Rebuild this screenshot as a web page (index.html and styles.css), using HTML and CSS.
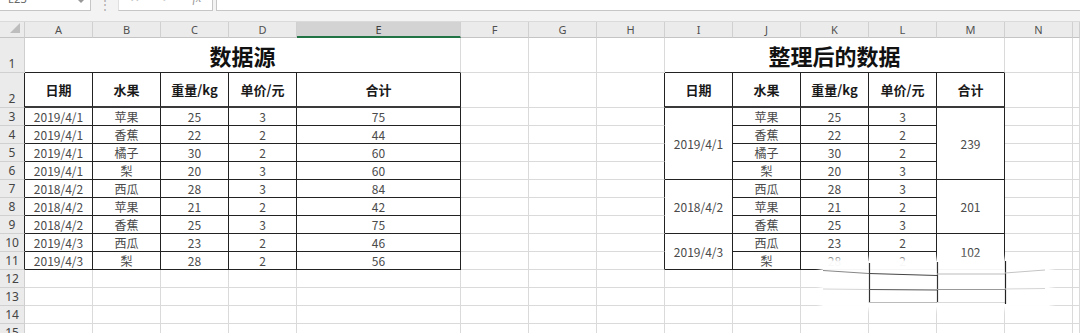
FILE: index.html
```html
<!DOCTYPE html>
<html lang="zh">
<head>
    <meta charset="UTF-8">
    <title>数据源</title>
    <link rel="stylesheet" href="styles.css">
</head>
<body>
<div class="page">
    <div class="bar">
        <div class="namebox"><span>E23</span><i class="caret"></i></div>
        <div class="dots">&#8942;</div>
        <div class="fxbox"><span>&#10005;</span><span>&#10003;</span><span class="fx">fx</span></div>
        <div class="formula"></div>
    </div>
    <div class="strip"></div>

    <div class="sheet">
        <!-- column headers -->
        <div class="corner"><svg width="12" height="12" viewBox="0 0 12 12"><polygon points="11,1 11,11 1,11" fill="#bdbdbd"/></svg></div>
        <div class="hd">A</div><div class="hd">B</div><div class="hd">C</div><div class="hd">D</div>
        <div class="hd sel">E</div><div class="hd">F</div><div class="hd">G</div><div class="hd">H</div>
        <div class="hd">I</div><div class="hd">J</div><div class="hd">K</div><div class="hd">L</div>
        <div class="hd">M</div><div class="hd">N</div><div class="hd"></div>

        <!-- row 1 -->
        <div class="rh">1</div>
        <div class="cell title ab span5">数据源</div>
        <div class="cell"></div><div class="cell"></div><div class="cell"></div>
        <div class="cell title ab span5">整理后的数据</div>
        <div class="cell"></div><div class="cell"></div>

        <!-- row 2 -->
        <div class="rh lb">2</div>
        <div class="cell t th">日期</div><div class="cell t th">水果</div><div class="cell t th">重量/kg</div><div class="cell t th">单价/元</div><div class="cell t th">合计</div>
        <div class="cell"></div><div class="cell"></div><div class="cell lb"></div>
        <div class="cell t th">日期</div><div class="cell t th">水果</div><div class="cell t th">重量/kg</div><div class="cell t th">单价/元</div><div class="cell t th">合计</div>
        <div class="cell"></div><div class="cell"></div>

        <!-- row 3 -->
        <div class="rh lb">3</div>
        <div class="cell t">2019/4/1</div><div class="cell t">苹果</div><div class="cell t">25</div><div class="cell t">3</div><div class="cell t">75</div>
        <div class="cell"></div><div class="cell"></div><div class="cell lb"></div>
        <div class="cell t rows4">2019/4/1</div><div class="cell t">苹果</div><div class="cell t">25</div><div class="cell t">3</div><div class="cell t rows4">239</div>
        <div class="cell"></div><div class="cell"></div>

        <!-- row 4 -->
        <div class="rh lb">4</div>
        <div class="cell t">2019/4/1</div><div class="cell t">香蕉</div><div class="cell t">22</div><div class="cell t">2</div><div class="cell t">44</div>
        <div class="cell"></div><div class="cell"></div><div class="cell lb"></div>
        <div class="cell t">香蕉</div><div class="cell t">22</div><div class="cell t">2</div>
        <div class="cell"></div><div class="cell"></div>

        <!-- row 5 -->
        <div class="rh lb">5</div>
        <div class="cell t">2019/4/1</div><div class="cell t">橘子</div><div class="cell t">30</div><div class="cell t">2</div><div class="cell t">60</div>
        <div class="cell"></div><div class="cell"></div><div class="cell lb"></div>
        <div class="cell t">橘子</div><div class="cell t">30</div><div class="cell t">2</div>
        <div class="cell"></div><div class="cell"></div>

        <!-- row 6 -->
        <div class="rh lb">6</div>
        <div class="cell t">2019/4/1</div><div class="cell t">梨</div><div class="cell t">20</div><div class="cell t">3</div><div class="cell t">60</div>
        <div class="cell"></div><div class="cell"></div><div class="cell lb"></div>
        <div class="cell t">梨</div><div class="cell t">20</div><div class="cell t">3</div>
        <div class="cell"></div><div class="cell"></div>

        <!-- row 7 -->
        <div class="rh lb">7</div>
        <div class="cell t">2018/4/2</div><div class="cell t">西瓜</div><div class="cell t">28</div><div class="cell t">3</div><div class="cell t">84</div>
        <div class="cell"></div><div class="cell"></div><div class="cell lb"></div>
        <div class="cell t rows3">2018/4/2</div><div class="cell t">西瓜</div><div class="cell t">28</div><div class="cell t">3</div><div class="cell t rows3">201</div>
        <div class="cell"></div><div class="cell"></div>

        <!-- row 8 -->
        <div class="rh lb">8</div>
        <div class="cell t">2018/4/2</div><div class="cell t">苹果</div><div class="cell t">21</div><div class="cell t">2</div><div class="cell t">42</div>
        <div class="cell"></div><div class="cell"></div><div class="cell lb"></div>
        <div class="cell t">苹果</div><div class="cell t">21</div><div class="cell t">2</div>
        <div class="cell"></div><div class="cell"></div>

        <!-- row 9 -->
        <div class="rh lb">9</div>
        <div class="cell t">2018/4/2</div><div class="cell t">香蕉</div><div class="cell t">25</div><div class="cell t">3</div><div class="cell t">75</div>
        <div class="cell"></div><div class="cell"></div><div class="cell lb"></div>
        <div class="cell t">香蕉</div><div class="cell t">25</div><div class="cell t">3</div>
        <div class="cell"></div><div class="cell"></div>

        <!-- row 10 -->
        <div class="rh lb">10</div>
        <div class="cell t">2019/4/3</div><div class="cell t">西瓜</div><div class="cell t">23</div><div class="cell t">2</div><div class="cell t">46</div>
        <div class="cell"></div><div class="cell"></div><div class="cell lb"></div>
        <div class="cell t rows2">2019/4/3</div><div class="cell t">西瓜</div><div class="cell t">23</div><div class="cell t">2</div><div class="cell t rows2">102</div>
        <div class="cell"></div><div class="cell"></div>

        <!-- row 11 -->
        <div class="rh lb">11</div>
        <div class="cell t">2019/4/3</div><div class="cell t">梨</div><div class="cell t">28</div><div class="cell t">2</div><div class="cell t">56</div>
        <div class="cell"></div><div class="cell"></div><div class="cell lb"></div>
        <div class="cell t">梨</div><div class="cell t">28</div><div class="cell t">2</div>
        <div class="cell"></div><div class="cell"></div>

        <!-- rows 12-15 -->
        <div class="rh">12</div>
        <div class="cell"></div><div class="cell"></div><div class="cell"></div><div class="cell"></div><div class="cell"></div>
        <div class="cell"></div><div class="cell"></div><div class="cell"></div><div class="cell"></div><div class="cell"></div>
        <div class="cell"></div><div class="cell"></div><div class="cell"></div><div class="cell"></div><div class="cell"></div>
        <div class="rh">13</div>
        <div class="cell"></div><div class="cell"></div><div class="cell"></div><div class="cell"></div><div class="cell"></div>
        <div class="cell"></div><div class="cell"></div><div class="cell"></div><div class="cell"></div><div class="cell"></div>
        <div class="cell"></div><div class="cell"></div><div class="cell"></div><div class="cell"></div><div class="cell"></div>
        <div class="rh">14</div>
        <div class="cell"></div><div class="cell"></div><div class="cell"></div><div class="cell"></div><div class="cell"></div>
        <div class="cell"></div><div class="cell"></div><div class="cell"></div><div class="cell"></div><div class="cell"></div>
        <div class="cell"></div><div class="cell"></div><div class="cell"></div><div class="cell"></div><div class="cell"></div>
        <div class="rh">15</div>
        <div class="cell"></div><div class="cell"></div><div class="cell"></div><div class="cell"></div><div class="cell"></div>
        <div class="cell"></div><div class="cell"></div><div class="cell"></div><div class="cell"></div><div class="cell"></div>
        <div class="cell"></div><div class="cell"></div><div class="cell"></div><div class="cell"></div><div class="cell"></div>
    </div>

    <!-- smudged patch over the lower right of the second table -->
    <div class="smudge">
        <svg width="226" height="46" viewBox="0 0 226 46">
            <line x1="0" y1="9.5" x2="46" y2="12.5" stroke="#888" stroke-width="1"/>
            <line x1="0" y1="28" x2="46" y2="28.5" stroke="#d4d4d4" stroke-width="1"/>
            <line x1="46.5" y1="2" x2="46.5" y2="42" stroke="#333" stroke-width="1.2"/>
            <line x1="46" y1="12.5" x2="114" y2="14.5" stroke="#444" stroke-width="1"/>
            <line x1="46" y1="28.5" x2="114" y2="29" stroke="#555" stroke-width="1"/>
            <line x1="46" y1="41.5" x2="114" y2="41.5" stroke="#bbb" stroke-width="1"/>
            <line x1="114.5" y1="1" x2="114.5" y2="42" stroke="#333" stroke-width="1.2"/>
            <line x1="114" y1="13" x2="182" y2="13" stroke="#bbb" stroke-width="1"/>
            <line x1="114" y1="28.5" x2="182" y2="28.5" stroke="#999" stroke-width="1"/>
            <line x1="114" y1="41.5" x2="182" y2="41.5" stroke="#dadada" stroke-width="1"/>
            <line x1="182.5" y1="0" x2="182.5" y2="43" stroke="#222" stroke-width="1.2"/>
            <line x1="182" y1="12" x2="222" y2="9" stroke="#c4c4c4" stroke-width="1"/>
            <line x1="182" y1="28" x2="222" y2="27.5" stroke="#d4d4d4" stroke-width="1"/>
        </svg>
    </div>
</div>
</body>
</html>
```

FILE: styles.css
```css
*{
    margin: 0;
    padding: 0;
    box-sizing: border-box;
}
body{
    background: #fff;
    font-family: "Noto Sans CJK SC", "Noto Sans", sans-serif;
    color: #3c3c3c;
}
.page{
    position: relative;
    width: 1080px;
    height: 333px;
    overflow: hidden;
}

/* formula bar, cut off at the top */
.bar{
    display: flex;
    height: 11px;
    background: #f3f3f3;
    overflow: hidden;
}
.namebox{
    width: 91px;
    display: flex;
    align-items: flex-end;
    justify-content: space-between;
    padding: 0 6px 4px 8px;
    background: #fff;
    border-right: 1px solid #c6c6c6;
    border-bottom: 1px solid #c6c6c6;
    font: 11px "Noto Sans", sans-serif;
    line-height: 14px;
    color: #666;
}
.caret{
    width: 0;
    height: 0;
    border-left: 3px solid transparent;
    border-right: 3px solid transparent;
    border-top: 3px solid #999;
    margin-bottom: 3px;
}
.dots{
    width: 27px;
    display: flex;
    align-items: flex-end;
    justify-content: center;
    font-size: 12px;
    line-height: 14px;
    color: #aaa;
}
.fxbox{
    width: 95px;
    display: flex;
    align-items: flex-end;
    justify-content: space-around;
    padding-bottom: 5px;
    background: #fff;
    border-right: 1px solid #c6c6c6;
    border-bottom: 1px solid #c6c6c6;
    border-left: 1px solid #e0e0e0;
    font: 12px "DejaVu Sans", sans-serif;
    line-height: 14px;
    color: #c4c4c4;
}
.fxbox .fx{
    font-style: italic;
    font-family: "Liberation Serif", serif;
    color: #999;
}
.formula{
    flex: 1;
    margin-left: 3px;
    background: #fff;
    border-left: 1px solid #c6c6c6;
    border-bottom: 1px solid #c6c6c6;
}
.strip{
    height: 11px;
    background: #f3f3f3;
    border-bottom: 1px solid #dadada;
}

/* sheet grid */
.sheet{
    display: grid;
    grid-template-columns: 25px 68px 68px 68px 68px 164px repeat(9, 68px) 1fr;
    grid-template-rows: 16px 35px 35px repeat(12, 18px) 1fr;
    height: 311px;
}
.corner{
    display: flex;
    align-items: flex-end;
    justify-content: flex-end;
    padding: 0 3px 3px 0;
    background: #ebebeb;
    border-right: 1px solid #cfcfcf;
    border-bottom: 1px solid #c4c4c4;
}
.hd{
    display: flex;
    align-items: center;
    justify-content: center;
    background: #ebebeb;
    border-right: 1px solid #d0d0d0;
    border-bottom: 1px solid #c4c4c4;
    font: 11px "Noto Sans", sans-serif;
    color: #505050;
}
.hd.sel{
    background: #d3d3d3;
    border-bottom: 2px solid #217346;
    color: #3f3f3f;
}
.rh{
    display: flex;
    align-items: flex-end;
    justify-content: center;
    background: #ebebeb;
    border-right: 1px solid #cfcfcf;
    border-bottom: 1px solid #d0d0d0;
    font: 12px "Noto Sans", sans-serif;
    line-height: 17px;
    color: #444;
}
.cell{
    display: flex;
    align-items: center;
    justify-content: center;
    border-right: 1px solid #dadada;
    border-bottom: 1px solid #dadada;
    font-size: 12px;
    line-height: 14px;
    color: #4a4a4a;
    white-space: nowrap;
    overflow: hidden;
}
.t{
    border-right-color: #222;
    border-bottom-color: #222;
}
.th{
    border-bottom: 2px solid #3a3a3a;
    font-size: 13px;
    font-weight: bold;
    color: #1a1a1a;
}
.lb{
    border-right-color: #222;
}
.ab{
    border-bottom-color: #222;
}
.title{
    font-size: 22px;
    line-height: 26px;
    font-weight: bold;
    color: #111;
}
.span5{
    grid-column: span 5;
}
.rows4{
    grid-row: span 4;
}
.rows3{
    grid-row: span 3;
}
.rows2{
    grid-row: span 2;
}

/* smudged patch */
.smudge{
    position: absolute;
    left: 823px;
    top: 261px;
    width: 226px;
    height: 46px;
    background: rgba(255, 255, 255, 0.96);
    box-shadow: 0 0 5px 3px rgba(255, 255, 255, 0.9);
}
.smudge svg{
    display: block;
}
```
